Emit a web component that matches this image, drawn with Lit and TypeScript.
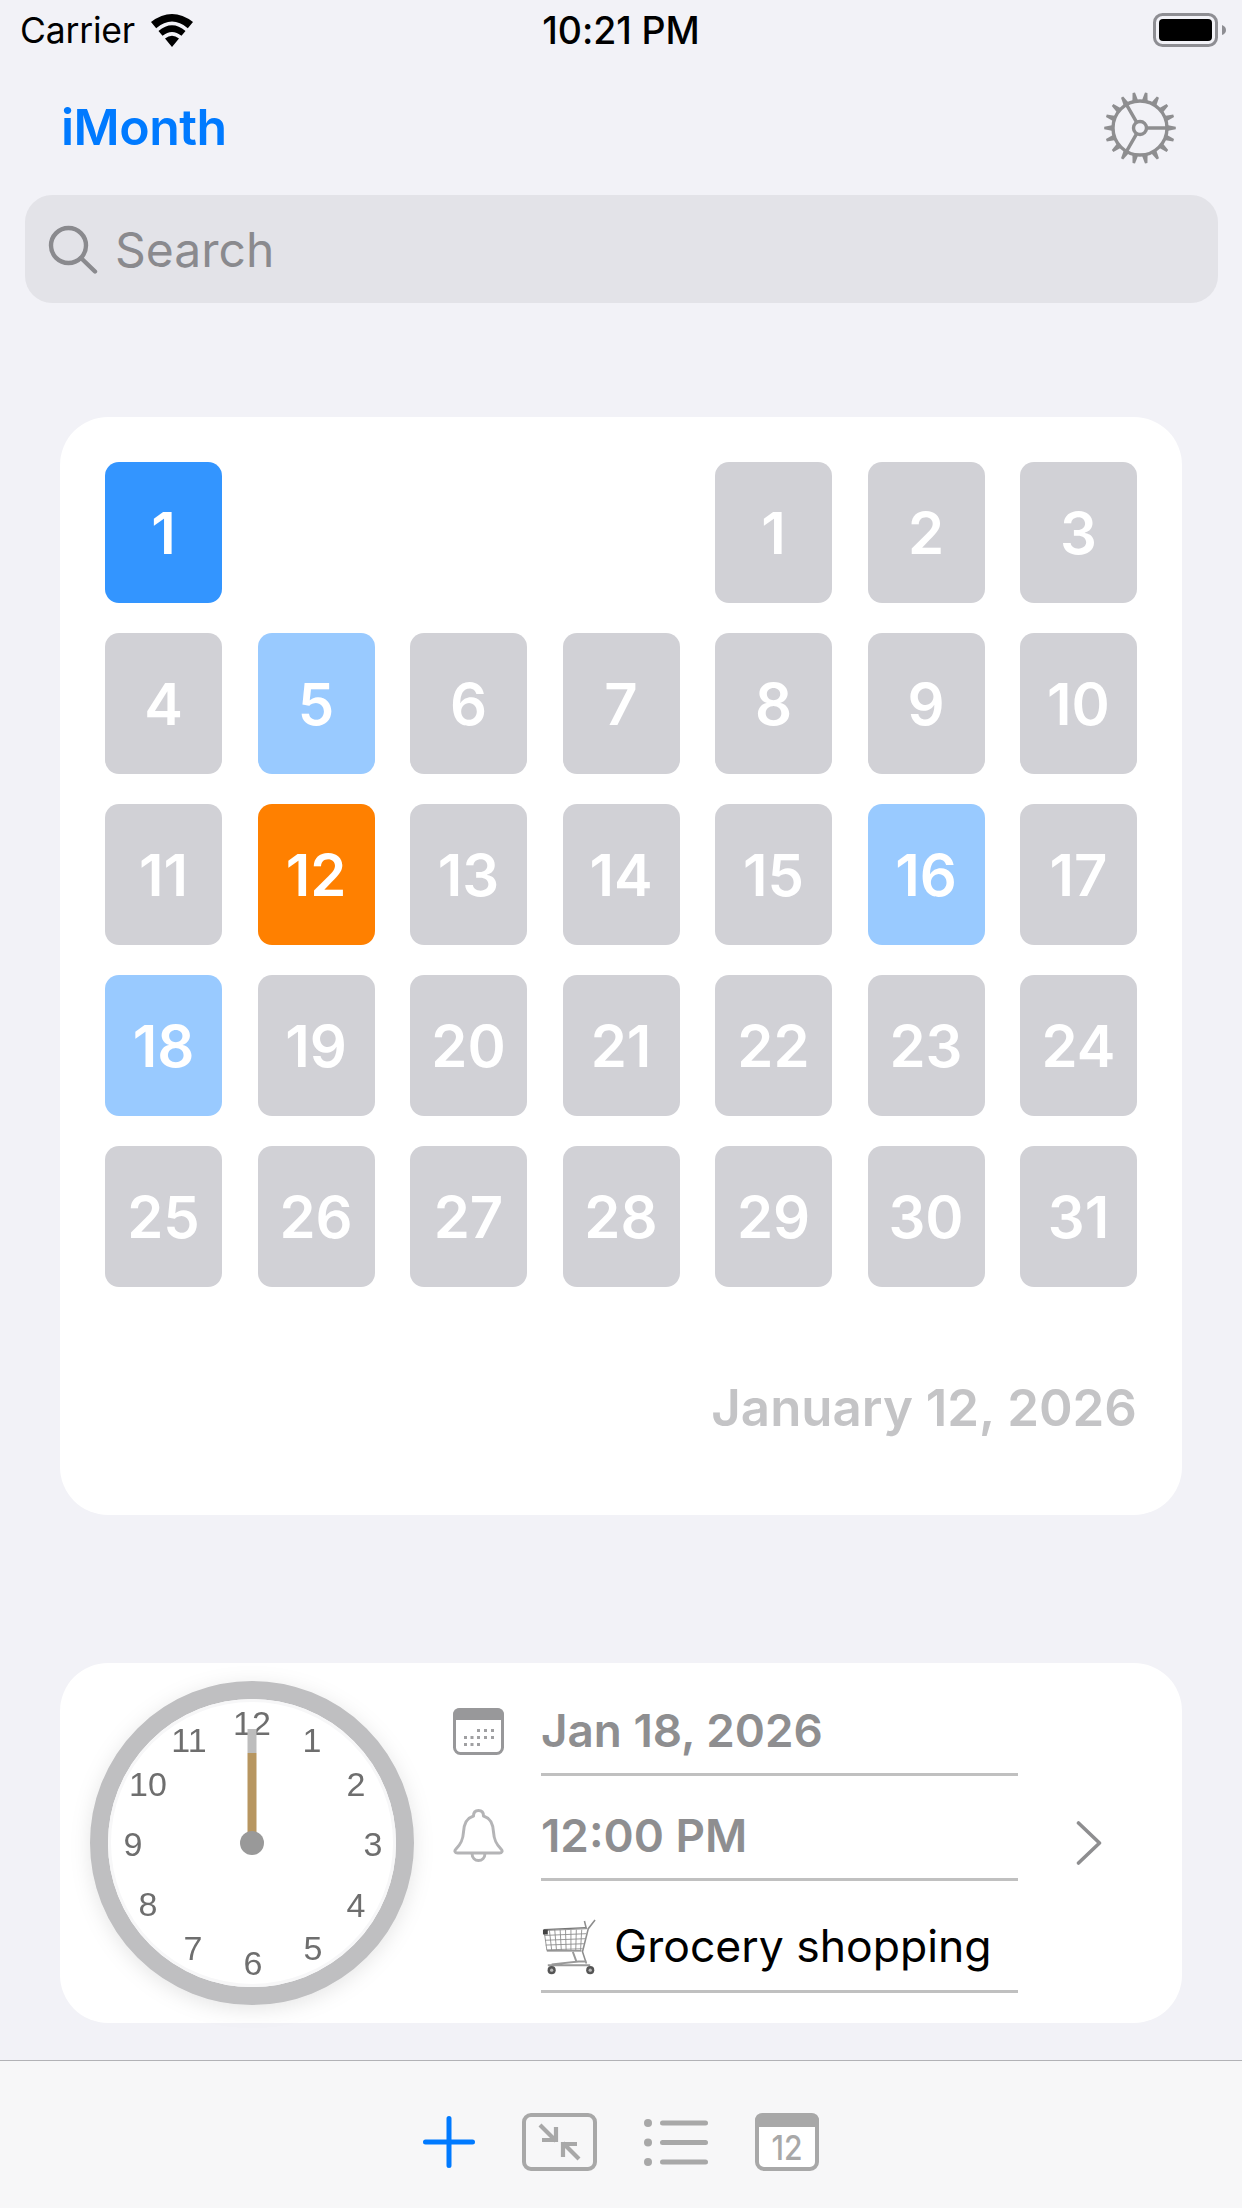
import { LitElement, html, css, svg } from "lit";
import { customElement } from "lit/decorators.js";

const rows: (number | null)[][] = [
  [1, null, null, null, 1, 2, 3],
  [4, 5, 6, 7, 8, 9, 10],
  [11, 12, 13, 14, 15, 16, 17],
  [18, 19, 20, 21, 22, 23, 24],
  [25, 26, 27, 28, 29, 30, 31],
];

function dayClass(r: number, c: number, d: number) {
  if (r === 0 && c === 0) return "day strong";
  if (d === 12) return "day today";
  if (d === 5 || d === 16 || d === 18) return "day light";
  return "day";
}

function gearTeeth() {
  const out = [];
  const n = 18;
  for (let i = 0; i < n; i++) {
    const a = (i / n) * Math.PI * 2;
    const p = (r: number, t: number) => `${(36 + Math.cos(t) * r).toFixed(2)},${(36 + Math.sin(t) * r).toFixed(2)}`;
    out.push(svg`<polygon points="${p(27, a - 0.11)} ${p(35.8, a - 0.035)} ${p(35.8, a + 0.035)} ${p(27, a + 0.11)}"/>`);
  }
  return out;
}

const clockNums: [string, number, number][] = [
  ["12", 0, -120], ["1", 60, -103], ["2", 104, -59], ["3", 121, 1], ["4", 104, 62], ["5", 61, 105],
  ["6", 1, 120], ["7", -59, 105], ["8", -104, 61], ["9", -119, 1], ["10", -104, -59], ["11", -63, -103],
];

@customElement("app-root")
export class AppRoot extends LitElement {
  static styles = css`
    :host {
      display: flex; flex-direction: column; width: 1242px; height: 2208px; overflow: hidden;
      background: #f2f2f7; font-family: Inter, "Liberation Sans", sans-serif; color: #000;
    }
    svg { display: block; flex: none; }
    .status { height: 60px; display: grid; grid-template-columns: 1fr auto 1fr; align-items: center; padding: 0 16px 0 20px; box-sizing: border-box; flex: none; }
    .left { display: flex; align-items: center; font-size: 35.5px; letter-spacing: -0.2px; }
    .left svg { margin-left: 15px; margin-top: -1px; }
    .time { font-weight: 500; font-size: 37.5px; letter-spacing: -0.1px; padding-top: 1px; margin-right: 4px; }
    .battery { justify-self: end; }
    .nav { height: 135px; flex: none; display: flex; align-items: center; justify-content: space-between; padding: 0 66px 0 61px; }
    .title { font-size: 50px; font-weight: 600; color: #007aff; letter-spacing: -0.5px; margin-top: -2px; }
    .search { height: 108px; flex: none; margin: 0 24px 0 25px; background: #e3e3e8; border-radius: 27px; display: flex; align-items: center; padding-left: 23px; gap: 17px; color: #8a8a8e; font-size: 48px; }
    .search span { margin-top: 1px; }
    .card { background: #fff; margin: 0 60px; box-sizing: border-box; flex: none; }
    .month { margin-top: 114px; height: 1098px; border-radius: 48px; padding: 45px 45px 0 45px; }
    .grid { display: grid; grid-template-columns: repeat(7, 117px); grid-auto-rows: 141px; column-gap: 35.5px; row-gap: 30px; }
    .day { border-radius: 14px; background: #d1d1d6; color: #fff; display: flex; align-items: center; justify-content: center; font-size: 58px; font-weight: 600; }
    .strong { background: #3395ff; }
    .light { background: #99caff; }
    .today { background: #ff8000; }
    .date { margin-top: 91px; text-align: right; line-height: 60px; font-size: 51px; font-weight: 600; color: #c4c4c6; }
    .alarm { margin-top: 148px; height: 360px; border-radius: 48px; display: flex; align-items: center; padding-left: 30px; }
    .clock { filter: drop-shadow(0 4px 10px rgba(0,0,0,0.10)); }
    .clock text { font-family: "Liberation Sans", Arial, sans-serif; font-size: 34px; fill: #6e6e6e; text-anchor: middle; dominant-baseline: central; }
    .details { margin-left: 39px; align-self: flex-start; margin-top: 27px; display: flex; flex-direction: column; width: 565px; }
    .row { display: flex; align-items: flex-end; }
    .slot { width: 88px; flex: none; height: 54px; margin-bottom: 18px; display: flex; align-items: center; }
    .field { flex: 1; box-sizing: border-box; border-bottom: 3px solid #c0c0c0; padding-bottom: 16px; line-height: 54px; font-size: 45.8px; font-weight: 600; color: #8e8e90; display: flex; align-items: flex-end; }
    .r1 .field { height: 86px; padding-bottom: 15px; }
    .r2 .field { height: 105px; padding-bottom: 15px; }
    .r3 .field { height: 112px; color: #000; font-weight: 400; font-size: 44.5px; padding-bottom: 17px; gap: 18px; }
    .r3 svg { margin-bottom: -2px; margin-left: 1px; }
    .chev { margin-left: 58px; }
    .toolbar { margin-top: auto; height: 148px; box-sizing: border-box; flex: none; border-top: 1px solid #b2b2b6; background: #f7f7f8; display: flex; align-items: center; justify-content: center; gap: 47px; padding-top: 15px; }
    .tool12 { font-family: Inter, "Liberation Sans", sans-serif; font-weight: 500; font-size: 34px; fill: #a8a8a8; text-anchor: middle; }
  `;

  private cart() {
    const v = [];
    for (let i = 0; i <= 7; i++) v.push(svg`<line x1="${2 + i * 5.6}" y1="11" x2="${5 + i * 5}" y2="32"/>`);
    const h = [];
    for (let i = 0; i <= 4; i++) h.push(svg`<line x1="${2 + i * 0.6}" y1="${12 + i * 5}" x2="${47 - i * 1.2}" y2="${10 + i * 5.2}"/>`);
    return html`<svg width="54" height="56" viewBox="0 0 56 58">
      <g stroke="#8a8a8a" stroke-width="0.9" fill="none">${v}${h}</g>
      <path d="M2 11 L46 9 M5 33 H41" stroke="#777" stroke-width="1.3" fill="none"/>
      <rect x="1" y="11" width="5" height="5" fill="#444"/>
      <path d="M55 1 L48 10 L42 34 L46 46 M44 2 L46 10" stroke="#8d8d8d" stroke-width="1.6" fill="none"/>
      <path d="M32 34 L36 45 M6 48 H50 M10 47 L38 44 H46" stroke="#999" stroke-width="2" fill="none"/>
      <circle cx="10" cy="53" r="4.2" fill="#555"/><circle cx="10" cy="53" r="1.7" fill="#bbb"/>
      <circle cx="50" cy="53" r="4.2" fill="#555"/><circle cx="50" cy="53" r="1.7" fill="#bbb"/>
    </svg>`;
  }

  private calDots() {
    const dots: [number, number][] = [
      [24, 21], [31, 21], [38, 21],
      [11, 28], [17.5, 28], [24, 28], [31, 28], [38, 28],
      [11, 35], [17.5, 35], [24, 35],
    ];
    return dots.map(([x, y]) => svg`<rect x="${x}" y="${y}" width="3" height="3" fill="#a0a0a2"/>`);
  }

  render() {
    return html`
      <div class="status">
        <div class="left">
          <span>Carrier</span>
          <svg width="44" height="34" viewBox="0 0 44 34">
            <path d="M22 34 L15 25.5 Q22 20 29 25.5 Z M12.5 22.8 L8.5 18 Q22 6.5 35.5 18 L31.5 22.8 Q22 15 12.5 22.8 Z M6.2 15.2 L1 9 Q22 -7 43 9 L37.8 15.2 Q22 2 6.2 15.2 Z" fill="#000"/>
          </svg>
        </div>
        <span class="time">10:21 PM</span>
        <svg class="battery" width="73" height="34" viewBox="0 0 73 34">
          <rect x="1.5" y="1.5" width="62" height="31" rx="8" fill="none" stroke="#8e8e93" stroke-width="3"/>
          <rect x="6" y="6" width="53" height="22" rx="4" fill="#000"/>
          <path d="M69 12 Q73 13.5 73 17 Q73 20.5 69 22 Z" fill="#8e8e93"/>
        </svg>
      </div>
      <div class="nav">
        <span class="title">iMonth</span>
        <svg width="72" height="72" viewBox="0 0 72 72" fill="#8e8e90">
          ${gearTeeth()}
          <circle cx="36" cy="36" r="27" fill="none" stroke="#8e8e90" stroke-width="3.4"/>
          <path d="M42.5 36 H63 M32.7 30.4 L22.5 12.6 M32.7 41.6 L22.5 59.4" stroke="#8e8e90" stroke-width="3.4" fill="none"/>
          <circle cx="36" cy="36" r="6.5" fill="none" stroke="#8e8e90" stroke-width="3.4"/>
        </svg>
      </div>
      <div class="search">
        <svg width="50" height="49" viewBox="0 0 50 49" fill="none" stroke="#8a8a8e" stroke-width="4.4" stroke-linecap="round">
          <circle cx="20.5" cy="20.5" r="17.5"/><path d="M33 33 L47 46.5"/>
        </svg>
        <span>Search</span>
      </div>
      <div class="card month">
        <div class="grid">
          ${rows.map((row, r) => row.map((d, c) => d === null ? html`<div></div>` : html`<div class="${dayClass(r, c, d)}">${d}</div>`))}
        </div>
        <div class="date">January 12, 2026</div>
      </div>
      <div class="card alarm">
        <svg class="clock" width="324" height="324" viewBox="-162 -162 324 324">
          <circle r="153" fill="#fff" stroke="#bfbfc1" stroke-width="18"/>
          <circle r="142.5" fill="none" stroke="#f7f7f8" stroke-width="3"/>
          ${clockNums.map(([t, x, y]) => svg`<text x="${x}" y="${y}">${t}</text>`)}
          <rect x="-4.5" y="-114" width="9" height="24" fill="#bdbdbd"/>
          <rect x="-4.5" y="-90" width="9" height="90" fill="#b79660"/>
          <circle r="12" fill="#999"/>
        </svg>
        <div class="details">
          <div class="row r1">
            <div class="slot">
              <svg width="51" height="47" viewBox="0 0 51 47">
                <rect x="1.5" y="1.5" width="48" height="44" rx="6" fill="#fff" stroke="#98989a" stroke-width="3"/>
                <path d="M0 7 Q0 0 7 0 H44 Q51 0 51 7 V12 H0 Z" fill="#98989a"/>
                ${this.calDots()}
              </svg>
            </div>
            <div class="field">Jan 18, 2026</div>
          </div>
          <div class="row r2">
            <div class="slot">
              <svg width="51" height="54" viewBox="0 0 51 54" fill="none" stroke="#b4b4b6" stroke-width="3" stroke-linejoin="round">
                <path d="M25.5 1.5 C21.5 1.5 20.5 4 20.5 7 C13 9.5 11 15 10.5 23 C10 31 8 35 3 40 C1 42 2 44 4.5 44 H46.5 C49 44 50 42 48 40 C43 35 41 31 40.5 23 C40 15 38 9.5 30.5 7 C30.5 4 29.5 1.5 25.5 1.5 Z"/>
                <path d="M19 44 C19 54 32 54 32 44"/>
              </svg>
            </div>
            <div class="field">12:00 PM</div>
          </div>
          <div class="row r3">
            <div class="slot"></div>
            <div class="field">${this.cart()}<span>Grocery shopping</span></div>
          </div>
        </div>
        <svg class="chev" width="26" height="44" viewBox="0 0 26 44" fill="none" stroke="#8e8e90" stroke-width="3.6" stroke-linecap="round" stroke-linejoin="round">
          <path d="M2.5 2 L23.5 22 L2.5 42"/>
        </svg>
      </div>
      <div class="toolbar">
        <svg width="52" height="52" viewBox="0 0 52 52" stroke="#007aff" stroke-width="5" stroke-linecap="round"><path d="M26 2.5 V49.5 M2.5 26 H49.5"/></svg>
        <svg width="75" height="58" viewBox="0 0 75 58" fill="none" stroke="#a8a8a8" stroke-width="4">
          <rect x="2" y="2" width="71" height="54" rx="7"/>
          <path d="M18 12 L34 28 M34 14 V27 H20 M57 46 L41 30 M41 44 V31 H55" stroke-width="4.2"/>
        </svg>
        <svg width="64" height="47" viewBox="0 0 64 47" fill="#a8a8a8">
          <circle cx="4" cy="4" r="4"/><circle cx="4" cy="23.5" r="4"/><circle cx="4" cy="43" r="4"/>
          <rect x="16" y="1.5" width="48" height="5" rx="2.5"/><rect x="16" y="21" width="48" height="5" rx="2.5"/><rect x="16" y="40.5" width="48" height="5" rx="2.5"/>
        </svg>
        <svg width="64" height="58" viewBox="0 0 64 58">
          <rect x="2" y="2" width="60" height="54" rx="7" fill="#fff" stroke="#a8a8a8" stroke-width="4"/>
          <path d="M0 8 Q0 0 8 0 H56 Q64 0 64 8 V14 H0 Z" fill="#a8a8a8"/>
          <text class="tool12" x="32" y="47" textLength="31" lengthAdjust="spacingAndGlyphs">12</text>
        </svg>
      </div>
    `;
  }
}
